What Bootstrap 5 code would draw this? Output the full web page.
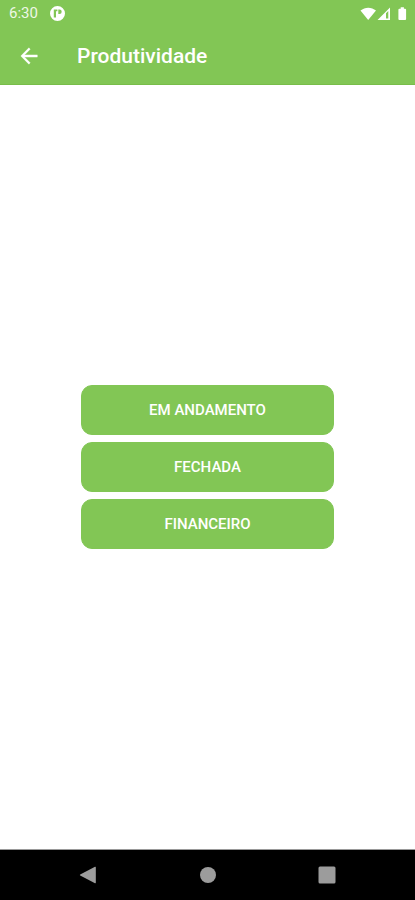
<!DOCTYPE html>
<html lang="pt-BR">
<head>
<meta charset="utf-8">
<meta name="viewport" content="width=device-width, initial-scale=1">
<title>Produtividade</title>
<link href="https://cdn.jsdelivr.net/npm/bootstrap@5.3.0/dist/css/bootstrap.min.css" rel="stylesheet">
<style>
  :root { --app-green: #82c655; }
  body { font-family: Roboto, "Liberation Sans", sans-serif; background: #fff; }
  svg { display: block; fill: currentColor; }
  .app-header { background: var(--app-green); border-bottom: 1px solid #78bd49; }
  .status-bar { height: 27px; padding: 0 8px 0 9px; font-size: 15px; line-height: 27px; }
  .status-time { color: #eef8e6; }
  .app-bar { height: 57px; padding: 0 15px; }
  .back-btn { width: 28px; height: 28px; }
  .back-btn svg { stroke: currentColor; stroke-width: .4; }
  .app-title { font-size: 21px; line-height: 28px; font-weight: 500; margin-left: 34px; }
  .options { width: 61.2%; gap: 7px; }
  .option-btn {
    --bs-btn-color: #fff; --bs-btn-bg: var(--app-green); --bs-btn-border-color: var(--app-green);
    --bs-btn-hover-color: #fff; --bs-btn-hover-bg: #74b843; --bs-btn-hover-border-color: #74b843;
    --bs-btn-active-color: #fff; --bs-btn-active-bg: #69a93b; --bs-btn-active-border-color: #69a93b;
    --bs-btn-border-radius: 11px; --bs-btn-font-size: 15px; --bs-btn-font-weight: 500;
    --bs-btn-line-height: 24px; --bs-btn-padding-y: 12px;
  }
  .system-nav { height: 51px; padding: 0 28px; background: #000; border-top: 1px solid #999; }
  .system-nav .btn { color: #9c9c9c; }
</style>
</head>
<body class="d-flex flex-column min-vh-100">
<header class="app-header text-white">
  <div class="status-bar d-flex align-items-center justify-content-between">
    <div class="d-flex align-items-center gap-2">
      <span class="status-time">6:30</span>
      <svg class="ms-1" width="15" height="15" viewBox="0 0 15 15" aria-hidden="true">
        <path fill-rule="evenodd" d="M7.500 0a7.500 7.500 0 1 1 0 15a7.500 7.500 0 0 1 0-15ZM3.800 3.500V11.500H6V5.300H7.400V3.500ZM8.300 3.500V7.900H9.500a2.200 2.200 0 0 0 0-4.400Z"/>
      </svg>
    </div>
    <div class="d-flex align-items-center">
      <svg width="48" height="16" viewBox="0 0 48 16" aria-hidden="true">
        <path d="M1.500 4.600C6 .7 12.500 .7 17 4.600L9.200 14Z"/>
        <path fill-rule="evenodd" d="M18.500 14L31 1.500V14ZM27 7.200V12.500H29.300V5.100Z"/>
        <path d="M41.700 1.300h3.200v1.500h1.200q1 0 1 1v9.200q0 1-1 1h-5.700q-1 0-1-1V3.800q0-1 1-1h1.300Z"/>
      </svg>
    </div>
  </div>
  <div class="app-bar d-flex align-items-center">
    <button type="button" class="back-btn btn p-0 border-0 text-white d-flex align-items-center justify-content-center" aria-label="Voltar">
      <svg width="18" height="18" viewBox="0 0 18 18" aria-hidden="true"><path d="M17.300 7.900H4.500L10.200 2.200L8.900.8L.8 9l8.100 8.200l1.300-1.400L4.500 10.100H17.300Z"/></svg>
    </button>
    <h1 class="app-title mb-0">Produtividade</h1>
  </div>
</header>
<main class="flex-grow-1 d-flex align-items-center justify-content-center">
  <div class="options d-grid">
    <button type="button" class="btn option-btn">EM ANDAMENTO</button>
    <button type="button" class="btn option-btn">FECHADA</button>
    <button type="button" class="btn option-btn">FINANCEIRO</button>
  </div>
</main>
<nav class="system-nav d-flex align-items-center" aria-label="Sistema">
  <button type="button" class="btn border-0 p-0 flex-fill w-100 d-flex justify-content-center" aria-label="Voltar do sistema">
    <svg width="18" height="18" viewBox="0 0 18 18" aria-hidden="true"><path d="M16 .8Q16.800.4 16.800 1.400V16.600Q16.800 17.600 16 17.200L1.200 9.500Q.4 9 1.200 8.500Z"/></svg>
  </button>
  <button type="button" class="btn border-0 p-0 flex-fill w-100 d-flex justify-content-center" aria-label="Início">
    <svg width="18" height="18" viewBox="0 0 18 18" aria-hidden="true"><circle cx="9" cy="9" r="8"/></svg>
  </button>
  <button type="button" class="btn border-0 p-0 flex-fill w-100 d-flex justify-content-center" aria-label="Recentes">
    <svg width="18" height="18" viewBox="0 0 18 18" aria-hidden="true"><rect x=".5" y=".5" width="17" height="17" rx="1.500"/></svg>
  </button>
</nav>
<script src="https://cdn.jsdelivr.net/npm/bootstrap@5.3.0/dist/js/bootstrap.bundle.min.js"></script>
</body>
</html>
